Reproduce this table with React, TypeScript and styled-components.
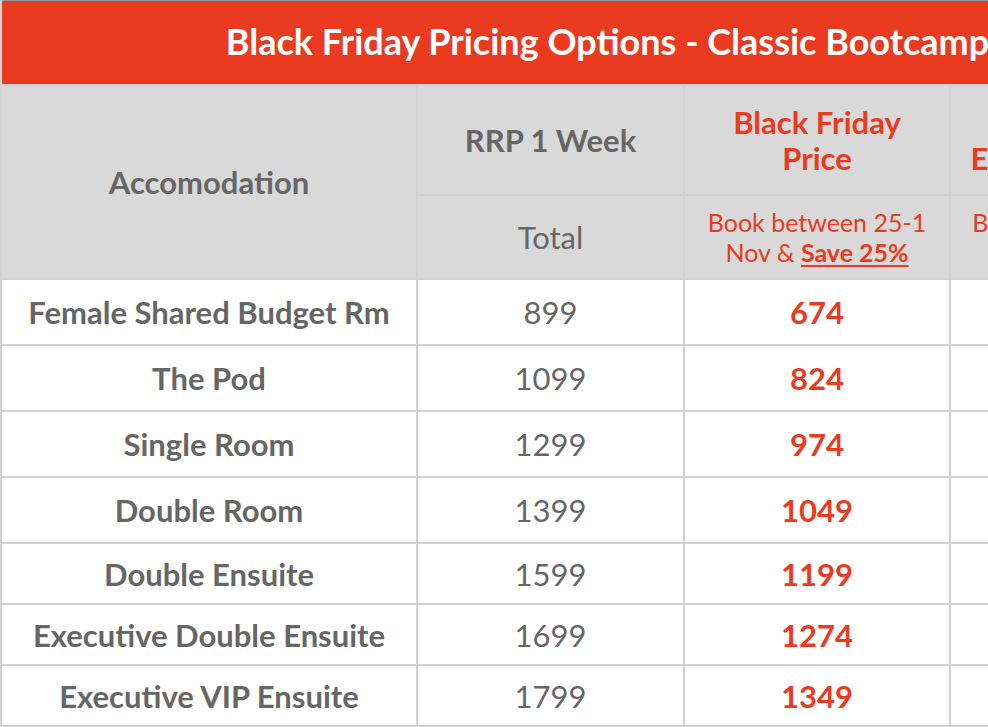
import React from 'react';
import styled, { createGlobalStyle } from 'styled-components';

const GlobalStyle = createGlobalStyle`
  html, body {
    margin: 0;
    padding: 0;
    background: #ffffff;
    overflow: hidden;
  }
  body {
    font-family: Lato, "Open Sans", "Liberation Sans", sans-serif;
  }
`;

const RED = '#EA3A1F';
const GREY_TEXT = '#666666';
const LINE = '#D2D2D2';

const Wrapper = styled.div`
  width: 988px;
  height: 727px;
  overflow: hidden;
`;

const Table = styled.table`
  width: 1214px;
  table-layout: fixed;
  border-collapse: collapse;
  border-left: 2px solid ${LINE};
`;

const TitleCell = styled.th`
  height: 80px;
  padding: 0 0 3px;
  background: ${RED};
  border-top: 1px solid #9a9a9a;
  color: #ffffff;
  font-size: 36px;
  font-weight: 700;
  text-align: center;
  vertical-align: middle;
  white-space: nowrap;
`;

const HeadCell = styled.th<{ $red?: boolean }>`
  height: 108px;
  padding: 0 10px;
  background: #D9D9D9;
  border: 2px solid ${LINE};
  color: ${p => (p.$red ? RED : GREY_TEXT)};
  font-size: 31px;
  font-weight: 700;
  line-height: 36px;
  text-align: center;
  vertical-align: middle;
`;

const SubCell = styled.td<{ $red?: boolean }>`
  height: 82px;
  padding: 0 6px;
  background: #D9D9D9;
  border: 2px solid ${LINE};
  color: ${p => (p.$red ? RED : GREY_TEXT)};
  font-size: ${p => (p.$red ? 25 : 31)}px;
  line-height: 30px;
  text-align: center;
  vertical-align: middle;

  b {
    font-weight: 700;
    text-decoration: underline;
    text-underline-offset: 3px;
  }
`;

const BodyCell = styled.td<{ $kind: 'name' | 'rrp' | 'deal'; $h: number }>`
  height: ${p => p.$h}px;
  padding: 0 8px;
  background: #ffffff;
  border: 2px solid ${LINE};
  color: ${p => (p.$kind === 'deal' ? RED : GREY_TEXT)};
  font-size: 31px;
  font-weight: ${p => (p.$kind === 'rrp' ? 400 : 700)};
  text-align: center;
  vertical-align: middle;
  white-space: nowrap;
`;

const rooms = [
  { name: 'Female Shared Budget Rm', rrp: 899, deal: 674, extra: 719, h: 64 },
  { name: 'The Pod', rrp: 1099, deal: 824, extra: 879, h: 64 },
  { name: 'Single Room', rrp: 1299, deal: 974, extra: 1039, h: 64 },
  { name: 'Double Room', rrp: 1399, deal: 1049, extra: 1119, h: 64 },
  { name: 'Double Ensuite', rrp: 1599, deal: 1199, extra: 1279, h: 59 },
  { name: 'Executive Double Ensuite', rrp: 1699, deal: 1274, extra: 1359, h: 59 },
  { name: 'Executive VIP Ensuite', rrp: 1799, deal: 1349, extra: 1439, h: 59 },
];

export default function App() {
  return (
    <Wrapper>
      <GlobalStyle />
      <Table>
        <colgroup>
          <col style={{ width: 416 }} />
          <col style={{ width: 267 }} />
          <col style={{ width: 266 }} />
          <col style={{ width: 263 }} />
        </colgroup>
        <thead>
          <tr>
            <TitleCell colSpan={4}>Black Friday Pricing Options - Classic Bootcamp</TitleCell>
          </tr>
          <tr>
            <HeadCell rowSpan={2}>Accomodation</HeadCell>
            <HeadCell>RRP 1 Week</HeadCell>
            <HeadCell $red>Black Friday<br />Price</HeadCell>
            <HeadCell $red>Cyber Week<br />Extended Prices</HeadCell>
          </tr>
          <tr>
            <SubCell>Total</SubCell>
            <SubCell $red>Book between 25-1<br />Nov &amp; <b>Save 25%</b></SubCell>
            <SubCell $red>Book between 26-2<br />Dec &amp; <b>Save 20%</b></SubCell>
          </tr>
        </thead>
        <tbody>
          {rooms.map(r => (
            <tr key={r.name}>
              <BodyCell $kind="name" $h={r.h}>{r.name}</BodyCell>
              <BodyCell $kind="rrp" $h={r.h}>{r.rrp}</BodyCell>
              <BodyCell $kind="deal" $h={r.h}>{r.deal}</BodyCell>
              <BodyCell $kind="deal" $h={r.h}>{r.extra}</BodyCell>
            </tr>
          ))}
        </tbody>
      </Table>
    </Wrapper>
  );
}
